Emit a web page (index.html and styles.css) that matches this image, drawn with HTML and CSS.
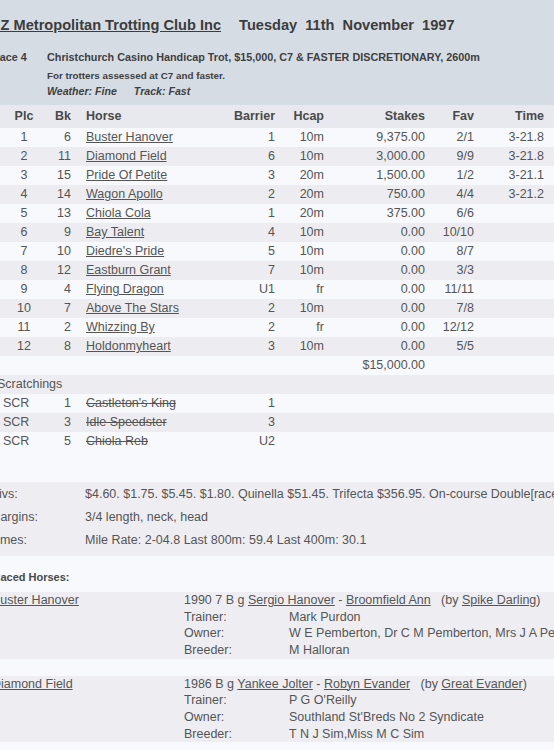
FILE: index.html
```html
<!DOCTYPE html>
<html>
<head>
<meta charset="utf-8">
<link rel="stylesheet" href="styles.css">
</head>
<body>
<div class="page">
  <header class="banner">
    <h1 class="title"><a href="#" class="club">NZ Metropolitan Trotting Club Inc</a><span class="date">Tuesday&nbsp;&nbsp;11th&nbsp;&nbsp;November&nbsp;&nbsp;1997</span></h1>
    <div class="race">
      <div class="race-no">Race 4</div>
      <div class="race-info">
        <div class="race-name">Christchurch Casino Handicap Trot, $15,000, C7 &amp; FASTER DISCRETIONARY, 2600m</div>
        <div class="race-cond">For trotters assessed at C7 and faster.</div>
        <div class="race-wx"><span>Weather: Fine</span><span class="track">Track: Fast</span></div>
      </div>
    </div>
  </header>

  <div class="results">
    <div class="row head">
      <div class="c plc">Plc</div><div class="c r">Bk</div><div class="c horse">Horse</div><div class="c r">Barrier</div><div class="c r">Hcap</div><div class="c r">Stakes</div><div class="c r">Fav</div><div class="c r">Time</div>
    </div>
    <div class="row">
      <div class="c plc">1</div><div class="c r">6</div><div class="c horse"><a href="#">Buster Hanover</a></div><div class="c r">1</div><div class="c r">10m</div><div class="c r">9,375.00</div><div class="c r">2/1</div><div class="c r">3-21.8</div>
    </div>
    <div class="row alt">
      <div class="c plc">2</div><div class="c r">11</div><div class="c horse"><a href="#">Diamond Field</a></div><div class="c r">6</div><div class="c r">10m</div><div class="c r">3,000.00</div><div class="c r">9/9</div><div class="c r">3-21.8</div>
    </div>
    <div class="row">
      <div class="c plc">3</div><div class="c r">15</div><div class="c horse"><a href="#">Pride Of Petite</a></div><div class="c r">3</div><div class="c r">20m</div><div class="c r">1,500.00</div><div class="c r">1/2</div><div class="c r">3-21.1</div>
    </div>
    <div class="row alt">
      <div class="c plc">4</div><div class="c r">14</div><div class="c horse"><a href="#">Wagon Apollo</a></div><div class="c r">2</div><div class="c r">20m</div><div class="c r">750.00</div><div class="c r">4/4</div><div class="c r">3-21.2</div>
    </div>
    <div class="row">
      <div class="c plc">5</div><div class="c r">13</div><div class="c horse"><a href="#">Chiola Cola</a></div><div class="c r">1</div><div class="c r">20m</div><div class="c r">375.00</div><div class="c r">6/6</div><div class="c r"></div>
    </div>
    <div class="row alt">
      <div class="c plc">6</div><div class="c r">9</div><div class="c horse"><a href="#">Bay Talent</a></div><div class="c r">4</div><div class="c r">10m</div><div class="c r">0.00</div><div class="c r">10/10</div><div class="c r"></div>
    </div>
    <div class="row">
      <div class="c plc">7</div><div class="c r">10</div><div class="c horse"><a href="#">Diedre's Pride</a></div><div class="c r">5</div><div class="c r">10m</div><div class="c r">0.00</div><div class="c r">8/7</div><div class="c r"></div>
    </div>
    <div class="row alt">
      <div class="c plc">8</div><div class="c r">12</div><div class="c horse"><a href="#">Eastburn Grant</a></div><div class="c r">7</div><div class="c r">10m</div><div class="c r">0.00</div><div class="c r">3/3</div><div class="c r"></div>
    </div>
    <div class="row">
      <div class="c plc">9</div><div class="c r">4</div><div class="c horse"><a href="#">Flying Dragon</a></div><div class="c r">U1</div><div class="c r">fr</div><div class="c r">0.00</div><div class="c r">11/11</div><div class="c r"></div>
    </div>
    <div class="row alt">
      <div class="c plc">10</div><div class="c r">7</div><div class="c horse"><a href="#">Above The Stars</a></div><div class="c r">2</div><div class="c r">10m</div><div class="c r">0.00</div><div class="c r">7/8</div><div class="c r"></div>
    </div>
    <div class="row">
      <div class="c plc">11</div><div class="c r">2</div><div class="c horse"><a href="#">Whizzing By</a></div><div class="c r">2</div><div class="c r">fr</div><div class="c r">0.00</div><div class="c r">12/12</div><div class="c r"></div>
    </div>
    <div class="row alt">
      <div class="c plc">12</div><div class="c r">8</div><div class="c horse"><a href="#">Holdonmyheart</a></div><div class="c r">3</div><div class="c r">10m</div><div class="c r">0.00</div><div class="c r">5/5</div><div class="c r"></div>
    </div>
    <div class="row">
      <div class="c plc"></div><div class="c r"></div><div class="c horse"></div><div class="c r"></div><div class="c r"></div><div class="c r">$15,000.00</div><div class="c r"></div><div class="c r"></div>
    </div>
    <div class="scr-label">Scratchings</div>
    <div class="row">
      <div class="c scr">SCR</div><div class="c r">1</div><div class="c horse"><s>Castleton's King</s></div><div class="c r">1</div><div class="c"></div><div class="c"></div><div class="c"></div><div class="c"></div>
    </div>
    <div class="row alt">
      <div class="c scr">SCR</div><div class="c r">3</div><div class="c horse"><s>Idle Speedster</s></div><div class="c r">3</div><div class="c"></div><div class="c"></div><div class="c"></div><div class="c"></div>
    </div>
    <div class="row">
      <div class="c scr">SCR</div><div class="c r">5</div><div class="c horse"><s>Chiola Reb</s></div><div class="c r">U2</div><div class="c"></div><div class="c"></div><div class="c"></div><div class="c"></div>
    </div>
  </div>

  <div class="summary">
    <div class="sum-row"><div class="sum-label">Divs:</div><div class="sum-val">$4.60. $1.75. $5.45. $1.80. Quinella $51.45. Trifecta $356.95. On-course Double[race 3/4] $23.60.</div></div>
    <div class="sum-row"><div class="sum-label">Margins:</div><div class="sum-val">3/4 length, neck, head</div></div>
    <div class="sum-row"><div class="sum-label">Times:</div><div class="sum-val">Mile Rate: 2-04.8 Last 800m: 59.4 Last 400m: 30.1</div></div>
  </div>

  <div class="placed-title">Placed Horses:</div>

  <div class="placed">
    <div class="placed-name"><a href="#">Buster Hanover</a></div>
    <div class="placed-detail">
      <div class="breed">1990 7 B g <a href="#">Sergio Hanover</a> - <a href="#">Broomfield Ann</a>&nbsp;&nbsp;&nbsp;(by <a href="#">Spike Darling</a>)</div>
      <div class="kv"><span class="k">Trainer:</span><span class="v">Mark Purdon</span></div>
      <div class="kv"><span class="k">Owner:</span><span class="v">W E Pemberton, Dr C M Pemberton, Mrs J A Pemberton</span></div>
      <div class="kv"><span class="k">Breeder:</span><span class="v">M Halloran</span></div>
    </div>
  </div>

  <div class="placed">
    <div class="placed-name"><a href="#">Diamond Field</a></div>
    <div class="placed-detail">
      <div class="breed">1986 B g <a href="#">Yankee Jolter</a> - <a href="#">Robyn Evander</a>&nbsp;&nbsp;&nbsp;(by <a href="#">Great Evander</a>)</div>
      <div class="kv"><span class="k">Trainer:</span><span class="v">P G O'Reilly</span></div>
      <div class="kv"><span class="k">Owner:</span><span class="v">Southland St'Breds No 2 Syndicate</span></div>
      <div class="kv"><span class="k">Breeder:</span><span class="v">T N J Sim,Miss M C Sim</span></div>
    </div>
  </div>
</div>
</body>
</html>
```

FILE: styles.css
```css
html {
  overflow: hidden;
  background: #f7f9fc;
}
body {
  margin: 0;
  font-family: "Liberation Sans", Arial, sans-serif;
  color: #555;
  background: #f7f9fc;
}
a {
  color: inherit;
}
.page {
  width: 564px;
  margin-left: -10px;
  white-space: nowrap;
}

/* banner */
.banner {
  background: #d6dce4;
  height: 105px;
  box-sizing: border-box;
  padding-top: 15px;
  color: #3f3f3f;
}
.title {
  margin: 0;
  font-size: 14.6px;
  font-weight: bold;
  line-height: 20px;
  color: #3c3c3c;
}
.club {
  color: inherit;
}
.date {
  margin-left: 18px;
}
.race {
  display: flex;
  margin-top: 15px;
  font-weight: bold;
}
.race-no {
  width: 55px;
  padding-left: 2px;
  font-size: 10.8px;
  line-height: 15px;
}
.race-name {
  font-size: 10.8px;
  line-height: 15px;
}
.race-cond {
  font-size: 9.8px;
  line-height: 14px;
  margin-top: 4px;
}
.race-wx {
  font-size: 10.6px;
  line-height: 16px;
  font-style: italic;
}
.track {
  margin-left: 17px;
}

/* results grid */
.row {
  display: grid;
  grid-template-columns: 58px 23px 149px 55px 49px 101px 49px 70px;
  height: 19px;
  line-height: 19px;
  font-size: 12.5px;
  background: #f7f9fc;
}
.row.alt {
  background: #ededf1;
}
.row.head {
  height: 23px;
  line-height: 23px;
  font-weight: bold;
  background: #e7e9ee;
  color: #4a4a4a;
}
.c {
  overflow: visible;
}
.plc {
  text-align: center;
  padding-left: 10px;
}
.scr {
  padding-left: 13px;
}
.r {
  text-align: right;
}
.horse {
  padding-left: 15px;
}
.horse s {
  text-decoration: line-through;
}
.scr-label {
  height: 19px;
  line-height: 19px;
  font-size: 12.5px;
  padding-left: 7px;
  background: #ededf1;
}

/* summary */
.summary {
  margin-top: 31px;
  padding: 1px 0 4px;
  background: #eeeef2;
  font-size: 12.5px;
}
.sum-row {
  display: flex;
  height: 23px;
  line-height: 23px;
}
.sum-label {
  width: 95px;
  flex: none;
}

/* placed */
.placed-title {
  margin-top: 12.5px;
  margin-bottom: 6.5px;
  font-size: 11px;
  font-weight: bold;
  line-height: 17px;
  color: #4a4a4a;
}
.placed {
  display: flex;
  background: #eeeef2;
  font-size: 12.5px;
  line-height: 16.7px;
  margin-bottom: 16.7px;
}
.placed-name {
  width: 192px;
  padding-left: 2px;
  flex: none;
}
.kv {
  display: flex;
}
.k {
  width: 105px;
  flex: none;
}
```
